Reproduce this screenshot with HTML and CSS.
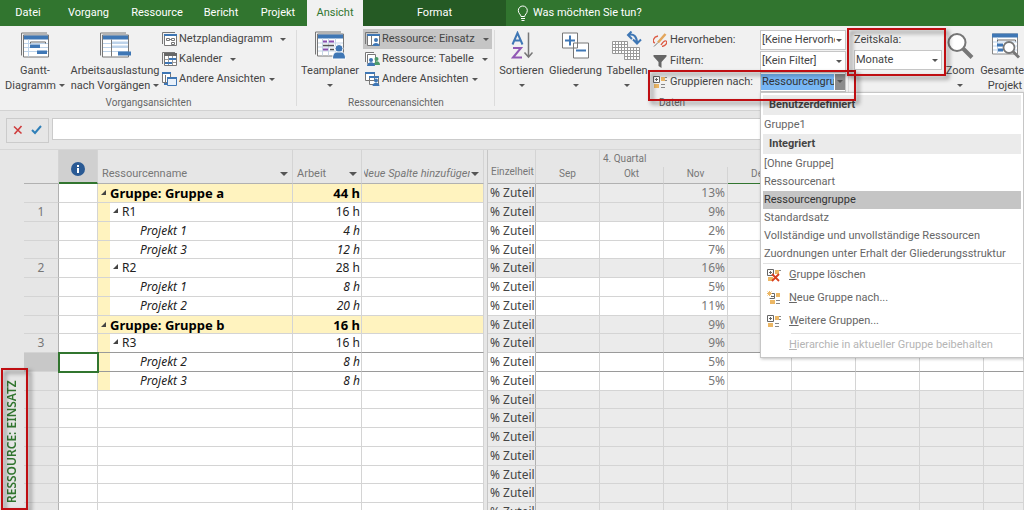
FILE: index.html
```html
<!DOCTYPE html>
<html lang="de">
<head>
    <meta charset="UTF-8">
    <meta name="viewport" content="width=device-width, initial-scale=1.0">
    <title>Ressource: Einsatz</title>
    <link rel="stylesheet" href="styles.css">
</head>
<body>
    <nav class="tabs">
        <a href="#" class="tab tab-file">Datei</a>
        <a href="#" class="tab tab-task">Vorgang</a>
        <a href="#" class="tab tab-resource">Ressource</a>
        <a href="#" class="tab tab-report">Bericht</a>
        <a href="#" class="tab tab-project">Projekt</a>
        <a href="#" class="tab tab-view active">Ansicht</a>
        <a href="#" class="tab tab-format">Format</a>
        <a href="#" class="tell-me">
            <svg width="12" height="17" viewBox="0 0 12 17" fill="none" stroke="#fff"><path d="M4 11.5c0-2-2.7-3-2.7-6a4.5 4.5 0 0 1 9 0c0 3-2.6 4-2.6 6zM4 13.5h4M4.500 15.500h3"/></svg>
            Was möchten Sie tun?
        </a>
    </nav>

    <div class="ribbon">
        <!-- Vorgangsansichten -->
        <section class="group group-tasks">
            <div class="group-body">
                <button class="big big-gantt">
                    <svg width="29" height="26" viewBox="0 0 29 26"><path d="M.5 23V.5H26" fill="none" stroke="#777"/><path d="M2.500 2.500h25v22h-25z" fill="#fff" stroke="#777"/><path d="M3 3h24v4H3z" fill="#3f77b5"/><path d="M3 11h24M3 15h24M3 19h24M7.500 7v17" stroke="#bdd3ea"/><path d="M9.500 11V9.500h15V11" fill="none" stroke="#666"/><path d="M9 12h10v3.500H9zM16 18h10v3.500H16z" fill="#3f77b5"/></svg>
                    <span>Gantt-</span>
                    <span class="arrow-line">Diagramm<i class="arrow"></i></span>
                </button>
                <button class="big big-usage">
                    <svg width="31" height="26" viewBox="0 0 31 26"><path d="M.5 23V.5H26" fill="none" stroke="#777"/><path d="M2.500 2.500h26v22h-26z" fill="#fff" stroke="#777"/><path d="M3 3h25v4H3z" fill="#3f77b5"/><path d="M3 11h25M3 15h25M3 19h25" stroke="#bdd3ea"/><path d="M12 9h16v2H12zM12 13h16v2H12z" fill="#bdd3ea"/><path d="M11.500 7v17" stroke="#777"/><path d="M18 19h13v4H18z" fill="#3f77b5"/></svg>
                    <span>Arbeitsauslastung</span>
                    <span class="arrow-line">nach Vorgängen<i class="arrow"></i></span>
                </button>
                <div class="stack">
                    <button class="small">
                        <svg width="15" height="14" viewBox="0 0 15 14"><path d="M.5 12V.5H13" fill="none" stroke="#777"/><path d="M2.500 2.500h12v11h-12z" fill="#fff" stroke="#777"/><path d="M2 2h13v2H2z" fill="#3f77b5"/><path d="M4.500 6.500h3v2h-3zM9.500 6.500h3v2h-3zM9.500 10.500h3v2h-3zM7.500 7.500h2" fill="none" stroke="#777"/></svg>
                        <span>Netzplandiagramm</span><i class="arrow wide"></i>
                    </button>
                    <button class="small">
                        <svg width="15" height="14" viewBox="0 0 15 14"><path d="M.5 12V.5H13" fill="none" stroke="#777"/><path d="M2.500 2.500h12v11h-12z" fill="#fff" stroke="#777"/><path d="M2 1h13v3H2z" fill="#666"/><path d="M6.500 4v9M10.500 4v9M3 7.500h11M3 10.500h11" stroke="#999"/><path d="M7 6h7v2H7zM3 10h7v2H3z" fill="#3f77b5"/></svg>
                        <span>Kalender</span><i class="arrow wide"></i>
                    </button>
                    <button class="small">
                        <svg width="15" height="14" viewBox="0 0 15 14"><path d="M.5 .5h8v10h-8zM3.500 3v7" fill="#fff" stroke="#777"/><path d="M0 0h9v2H0z" fill="#3f77b5"/><path d="M5.500 5.500h9v8h-9z" fill="#e9f1fa" stroke="#3f77b5"/><path d="M5 5h10v2H5zM2 11h3v2H2z" fill="#3f77b5"/></svg>
                        <span>Andere Ansichten</span><i class="arrow"></i>
                    </button>
                </div>
            </div>
            <div class="group-title">Vorgangsansichten</div>
        </section>

        <!-- Ressourcenansichten -->
        <section class="group group-resources">
            <div class="group-body">
                <button class="big big-team">
                    <svg width="31" height="28" viewBox="0 0 31 28"><path d="M.5 23V.5H26" fill="none" stroke="#777"/><path d="M2.500 2.500h26v22h-26z" fill="#fff" stroke="#777"/><path d="M3 3h25v4H3z" fill="#3f77b5"/><path d="M7.500 7v17M3 11.500h25M3 15.500h25M3 19.500h25M13.500 7v17M20.500 7v17" stroke="#c5d5e6"/><path d="M8 10h4M14 10h5M8 18h5" stroke="#8a4fb0" stroke-width="2"/><path d="M8 14h11M15 18h4" stroke="#555" stroke-width="1.500"/><circle cx="24" cy="17" r="4" fill="#3f77b5" stroke="#fff"/><path d="M17.500 27.500c0-7 3-7 6.500-7s6.500 0 6.500 7z" fill="#3f77b5" stroke="#fff"/></svg>
                    <span>Teamplaner</span>
                    <i class="arrow"></i>
                </button>
                <div class="stack">
                    <button class="small pressed">
                        <svg width="15" height="14" viewBox="0 0 15 14"><path d="M.5 12V.5H13" fill="none" stroke="#777"/><path d="M2.500 2.500h12v11h-12zM6.500 3v10" fill="#fff" stroke="#777"/><path d="M2 2h13v2H2z" fill="#3f77b5"/><circle cx="11" cy="8" r="2" fill="#3f77b5"/><path d="M7.500 14c0-4 7-4 7 0z" fill="#3f77b5"/></svg>
                        <span>Ressource: Einsatz</span><i class="arrow wide"></i>
                    </button>
                    <button class="small">
                        <svg width="15" height="14" viewBox="0 0 15 14"><path d="M.5 10V.5H9M2.500 2.500h8v9h-8z" fill="#fff" stroke="#777"/><circle cx="11.500" cy="7" r="2" fill="#4c9b6a"/><path d="M9 13c0-5 6-5 6 0z" fill="#4c9b6a"/><circle cx="6" cy="8" r="2" fill="#3f77b5"/><path d="M2 14c0-5 8-5 8 0z" fill="#3f77b5"/></svg>
                        <span>Ressource: Tabelle</span><i class="arrow wide"></i>
                    </button>
                    <button class="small">
                        <svg width="15" height="14" viewBox="0 0 15 14"><path d="M.5 .5h9v8h-9zM4.500 4.500h9v8h-9z" fill="#fff" stroke="#777"/><path d="M0 0h10v2H0zM4 4h10v2H4z" fill="#3f77b5"/><circle cx="11" cy="8.500" r="2" fill="#3f77b5"/><path d="M7.500 14c0-4.500 7-4.500 7 0z" fill="#3f77b5"/></svg>
                        <span>Andere Ansichten</span><i class="arrow"></i>
                    </button>
                </div>
            </div>
            <div class="group-title">Ressourcenansichten</div>
        </section>

        <!-- Daten -->
        <section class="group group-data">
            <div class="group-body">
                <button class="big big-sort">
                    <svg width="22" height="28" viewBox="0 0 22 28" fill="none" stroke-width="2"><path d="M1.500 13 6.500 1.500 11.500 13M3.200 9h6.600" stroke="#3f77b5"/><path d="M2 16.500h8L2 26h9" stroke="#9159b5"/><path d="M17.500 1v24M13.500 21l4 4.500 4-4.500" stroke="#777" stroke-width="1.500"/></svg>
                    <span>Sortieren</span>
                    <i class="arrow"></i>
                </button>
                <button class="big big-outline">
                    <svg width="27" height="28" viewBox="0 0 27 28"><path d="M.5 1.500h15v15H.5zM11.500 11.500h15v15h-15z" fill="#fff" stroke="#777"/><path d="M3 9h10M8 4v10M14 19h10" stroke="#3f77b5" stroke-width="2"/></svg>
                    <span>Gliederung</span>
                    <i class="arrow"></i>
                </button>
                <button class="big big-tables">
                    <svg width="30" height="29" viewBox="0 0 30 29"><path d="M.5 10.500h15v12H.5zM.5 13.500h15M.5 16.500h15M.5 19.500h15M3.500 10v12M6.500 10v12M9.500 10v12M12.500 10v12" fill="#fff" stroke="#999"/><path d="M12.500 16.500h15v12h-15zM12.500 19.500h15M12.500 22.500h15M12.500 25.500h15M15.500 16v12M18.500 16v12M21.500 16v12M24.500 16v12" fill="#fff" stroke="#999"/><path d="M16 4c6-2 9 2 9 8M19.500 .5L16 4l4 4M21 8.500l4 4 4-4" fill="none" stroke="#3f77b5" stroke-width="2"/></svg>
                    <span>Tabellen</span>
                    <i class="arrow"></i>
                </button>
                <div class="filters">
                    <div class="filter-row">
                        <svg width="14" height="14" viewBox="0 0 14 14" fill="none"><path d="M5 9.500 12.500 1" stroke="#e3a65c" stroke-width="2.500"/><path d="M5 3C0 4-1 9 2 10M8 12c2-3 3-5 5-4s0 5-4 5.500" stroke="#dd5a43" stroke-width="1.300"/><path d="M1 13.500l4-4" stroke="#777"/></svg>
                        <label for="highlight">Hervorheben:</label>
                        <div class="field"><select id="highlight"><option>[Keine Hervorhebung]</option></select></div>
                    </div>
                    <div class="filter-row">
                        <svg width="14" height="14" viewBox="0 0 14 14"><path d="M.5 1h13v1.500L8.500 8v6l-3-2V8L.5 2.500z" fill="#666"/></svg>
                        <label for="filter">Filtern:</label>
                        <div class="field"><select id="filter"><option>[Kein Filter]</option></select></div>
                    </div>
                    <div class="filter-row marked">
                        <svg width="14" height="14" viewBox="0 0 14 14"><path d="M.5 1.500h6v6h-6zM2 4.500h3M3.500 3v3" fill="#fff" stroke="#666"/><path d="M8 2h4v4H8zM1 9h5v4H1z" fill="#ecb765"/><path d="M12 2.500h2M12 5.500h2M8 9.500h4M8 12.500h4" stroke="#888"/></svg>
                        <label for="group-by">Gruppieren nach:</label>
                        <div class="field combo">
                            <input id="group-by" type="text" value="Ressourcengruppe">
                            <button class="combo-button" aria-label="Öffnen"><i class="arrow"></i></button>
                            <div class="menu">
                                <div class="menu-title">Benutzerdefiniert</div>
                                <button class="menu-item">Gruppe1</button>
                                <div class="menu-title">Integriert</div>
                                <button class="menu-item">[Ohne Gruppe]</button>
                                <button class="menu-item">Ressourcenart</button>
                                <button class="menu-item selected">Ressourcengruppe</button>
                                <button class="menu-item">Standardsatz</button>
                                <button class="menu-item">Vollständige und unvollständige Ressourcen</button>
                                <button class="menu-item">Zuordnungen unter Erhalt der Gliederungsstruktur</button>
                                <hr>
                                <button class="menu-command">
                                    <svg width="14" height="14" viewBox="0 0 14 14"><path d="M.5 1.500h6v6h-6zM2 4.500h3M3.500 3v3" fill="#fff" stroke="#666"/><path d="M8 2h4v4H8zM1 9h5v4H1z" fill="#ecb765"/><path d="M12 2.500h2" stroke="#888"/><path d="M5 6l7 7M12 6l-7 7" stroke="#d8401f" stroke-width="1.800"/></svg>
                                    <span><u>G</u>ruppe löschen</span>
                                </button>
                                <button class="menu-command">
                                    <svg width="14" height="14" viewBox="0 0 14 14"><path d="M3.500 2.500h4v5h-5M4 5.500h3" fill="#fff" stroke="#666"/><path d="M9 2h4v4H9zM3 9h5v4H3z" fill="#ecb765"/><path d="M9 9.500h4M9 12.500h4" stroke="#888"/><path d="M0 2.500h5M2.500 0v5M.5 .5l4 4M4.500 .5l-4 4" stroke="#ecb765"/></svg>
                                    <span><u>N</u>eue Gruppe nach...</span>
                                </button>
                                <button class="menu-command">
                                    <svg width="14" height="14" viewBox="0 0 14 14"><path d="M.5 1.500h6v6h-6zM2 4.500h3M3.500 3v3" fill="#fff" stroke="#666"/><path d="M8 2h4v4H8zM1 9h5v4H1z" fill="#ecb765"/><path d="M12 2.500h2M12 5.500h2M8 9.500h4M8 12.500h4" stroke="#888"/></svg>
                                    <span><u>W</u>eitere Gruppen...</span>
                                </button>
                                <hr class="short">
                                <button class="menu-command" disabled><span><u>H</u>ierarchie in aktueller Gruppe beibehalten</span></button>
                            </div>
                        </div>
                    </div>
                </div>
            </div>
            <div class="group-title">Daten</div>
        </section>

        <!-- Zoom -->
        <section class="group group-zoom">
            <div class="group-body">
                <div class="timescale marked">
                    <label for="timescale">Zeitskala:</label>
                    <div class="field"><select id="timescale"><option>Monate</option></select></div>
                </div>
                <button class="big big-zoom">
                    <svg width="28" height="28" viewBox="0 0 28 28"><circle cx="11" cy="11" r="8.500" fill="#fff" stroke="#777" stroke-width="2"/><path d="M17 17l9 9" stroke="#777" stroke-width="4"/></svg>
                    <span>Zoom</span>
                    <i class="arrow"></i>
                </button>
                <button class="big big-project">
                    <svg width="29" height="28" viewBox="0 0 29 28"><path d="M1.500 2.500h25v20h-25z" fill="#fff" stroke="#888"/><path d="M1 2h26v4H1z" fill="#3f77b5"/><path d="M2 10.500h24M2 14.500h24M2 18.500h24M6.500 6v16" stroke="#bdd3ea"/><path d="M6.500 10V8.500h18V10" fill="none" stroke="#666"/><path d="M6 12h6v3H6zM7 17h5v3H7z" fill="#3f77b5"/><circle cx="18" cy="16" r="5.500" fill="#fff" stroke="#777" stroke-width="1.800"/><path d="M22 20l6 6" stroke="#777" stroke-width="3"/></svg>
                    <span>Gesamtes</span>
                    <span>Projekt</span>
                </button>
            </div>
        </section>
    </div>

    <div class="entry-bar">
        <div class="entry-buttons">
            <button aria-label="Abbrechen"><svg width="10" height="10" viewBox="0 0 10 10"><path d="M1 1.500l7.500 7M8.500 1l-7 8" stroke="#cf3c3c" stroke-width="1.600"/></svg></button>
            <button aria-label="Eingeben"><svg width="11" height="10" viewBox="0 0 11 10"><path d="M1 5l3 3 6-7" fill="none" stroke="#2f7fb8" stroke-width="2"/></svg></button>
        </div>
        <input type="text" class="entry-input" aria-label="Eingabe">
    </div>

    <main class="sheet">
        <div class="view-bar">
            <div class="view-label marked">
                <div class="view-name">RESSOURCE: EINSATZ</div>
            </div>
        </div>

        <table class="grid resource-grid">
            <colgroup><col class="c-number"><col class="c-info"><col class="c-name"><col class="c-work"><col class="c-new"></colgroup>
            <thead>
                <tr>
                    <th></th>
                    <th class="info"><svg width="14" height="14" viewBox="0 0 14 14"><circle cx="7" cy="7" r="7" fill="#2a5a94"/><path d="M7 3v2M7 6v5" stroke="#fff" stroke-width="2"/></svg></th>
                    <th><div class="head">Ressourcenname<i class="arrow dark"></i></div></th>
                    <th><div class="head">Arbeit<i class="arrow dark"></i></div></th>
                    <th class="new"><div class="head"><span>Neue Spalte hinzufügen</span><i class="arrow dark"></i></div></th>
                </tr>
            </thead>
            <tbody>
                <tr class="total"><th></th><td></td><td><i class="fold"></i>Gruppe: Gruppe a</td><td>44 h</td><td></td></tr>
                <tr class="resource"><th>1</th><td></td><td><i class="fold"></i>R1</td><td>16 h</td><td></td></tr>
                <tr class="task"><th></th><td></td><td>Projekt 1</td><td>4 h</td><td></td></tr>
                <tr class="task"><th></th><td></td><td>Projekt 3</td><td>12 h</td><td></td></tr>
                <tr class="resource"><th>2</th><td></td><td><i class="fold"></i>R2</td><td>28 h</td><td></td></tr>
                <tr class="task"><th></th><td></td><td>Projekt 1</td><td>8 h</td><td></td></tr>
                <tr class="task"><th></th><td></td><td>Projekt 2</td><td>20 h</td><td></td></tr>
                <tr class="total"><th></th><td></td><td><i class="fold"></i>Gruppe: Gruppe b</td><td>16 h</td><td></td></tr>
                <tr class="resource before-current"><th>3</th><td></td><td><i class="fold"></i>R3</td><td>16 h</td><td></td></tr>
                <tr class="task current"><th></th><td></td><td>Projekt 2</td><td>8 h</td><td></td></tr>
                <tr class="task"><th></th><td></td><td>Projekt 3</td><td>8 h</td><td></td></tr>
                <tr><th></th><td></td><td></td><td></td><td></td></tr>
                <tr><th></th><td></td><td></td><td></td><td></td></tr>
                <tr><th></th><td></td><td></td><td></td><td></td></tr>
                <tr><th></th><td></td><td></td><td></td><td></td></tr>
                <tr><th></th><td></td><td></td><td></td><td></td></tr>
                <tr><th></th><td></td><td></td><td></td><td></td></tr>
                <tr><th></th><td></td><td></td><td></td><td></td></tr>
            </tbody>
        </table>

        <div class="splitter"></div>

        <div class="time-pane">
            <table class="grid time-grid">
                <colgroup><col class="c-detail"><col class="c-month"><col class="c-month"><col class="c-month"><col class="c-month"><col class="c-month"><col class="c-month"><col class="c-month"><col></colgroup>
                <thead>
                    <tr>
                        <th rowspan="2" class="detail-head"><div>Einzelheiten</div></th>
                        <th></th>
                        <th colspan="3" class="quarter">4. Quartal</th>
                        <th colspan="3"></th>
                        <th></th>
                    </tr>
                    <tr class="months"><th>Sep</th><th>Okt</th><th>Nov</th><th class="marked-month">Dez</th><th></th><th></th><th></th><th></th></tr>
                </thead>
                <tbody>
                    <tr class="sum"><th>% Zuteil</th><td></td><td></td><td>13%</td><td></td><td></td><td></td><td></td><td></td></tr>
                    <tr class="sum"><th>% Zuteil</th><td></td><td></td><td>9%</td><td></td><td></td><td></td><td></td><td></td></tr>
                    <tr><th>% Zuteil</th><td></td><td></td><td>2%</td><td></td><td></td><td></td><td></td><td></td></tr>
                    <tr><th>% Zuteil</th><td></td><td></td><td>7%</td><td></td><td></td><td></td><td></td><td></td></tr>
                    <tr class="sum"><th>% Zuteil</th><td></td><td></td><td>16%</td><td></td><td></td><td></td><td></td><td></td></tr>
                    <tr><th>% Zuteil</th><td></td><td></td><td>5%</td><td></td><td></td><td></td><td></td><td></td></tr>
                    <tr><th>% Zuteil</th><td></td><td></td><td>11%</td><td></td><td></td><td></td><td></td><td></td></tr>
                    <tr class="sum"><th>% Zuteil</th><td></td><td></td><td>9%</td><td></td><td></td><td></td><td></td><td></td></tr>
                    <tr class="sum before-current"><th>% Zuteil</th><td></td><td></td><td>9%</td><td></td><td></td><td></td><td></td><td></td></tr>
                    <tr class="current"><th>% Zuteil</th><td></td><td></td><td>5%</td><td></td><td></td><td></td><td></td><td></td></tr>
                    <tr><th>% Zuteil</th><td></td><td></td><td>5%</td><td></td><td></td><td></td><td></td><td></td></tr>
                    <tr class="sum"><th>% Zuteil</th><td></td><td></td><td></td><td></td><td></td><td></td><td></td><td></td></tr>
                    <tr class="sum"><th>% Zuteil</th><td></td><td></td><td></td><td></td><td></td><td></td><td></td><td></td></tr>
                    <tr class="sum"><th>% Zuteil</th><td></td><td></td><td></td><td></td><td></td><td></td><td></td><td></td></tr>
                    <tr class="sum"><th>% Zuteil</th><td></td><td></td><td></td><td></td><td></td><td></td><td></td><td></td></tr>
                    <tr class="sum"><th>% Zuteil</th><td></td><td></td><td></td><td></td><td></td><td></td><td></td><td></td></tr>
                    <tr class="sum"><th>% Zuteil</th><td></td><td></td><td></td><td></td><td></td><td></td><td></td><td></td></tr>
                    <tr class="sum"><th>% Zuteil</th><td></td><td></td><td></td><td></td><td></td><td></td><td></td><td></td></tr>
                </tbody>
            </table>
        </div>
    </main>
</body>
</html>
```

FILE: styles.css
```css
* {
    margin: 0;
    padding: 0;
    box-sizing: border-box;
}

body {
    font-family: Roboto, 'Noto Sans', sans-serif;
    font-size: 11px;
    line-height: 16px;
    color: #444;
    background-color: #e6e6e6;
    height: 100vh;
    overflow: hidden;
    display: flex;
    flex-direction: column;
}

button,
input,
select {
    font: inherit;
    color: inherit;
    border: none;
    background: none;
    white-space: nowrap;
}

button {
    cursor: pointer;
}

svg {
    display: block;
    flex: none;
}

/* Register */
.tabs {
    display: flex;
    flex: none;
    height: 26px;
    background-color: #31752f;
}

.tab,
.tell-me {
    display: flex;
    align-items: center;
    justify-content: center;
    color: #fff;
    text-decoration: none;
}

.tab-file {
    width: 56px;
}

.tab-task {
    width: 65px;
}

.tab-resource {
    width: 72px;
}

.tab-report {
    width: 56px;
}

.tab-project {
    width: 58px;
}

.tab-view {
    width: 56px;
}

.tab-format {
    width: 143px;
    background-color: #255a24;
}

.tab.active {
    background-color: #f1f1f1;
    color: #31752f;
}

.tell-me {
    padding-left: 11px;
    gap: 4px;
}

/* Menueband */
.ribbon {
    display: flex;
    flex: none;
    height: 85px;
    background-color: #f1f1f1;
    border-bottom: 1px solid #d2d2d2;
}

.group {
    position: relative;
    display: flex;
    flex-direction: column;
    flex: none;
    padding-top: 3px;
}

.group::after {
    content: "";
    position: absolute;
    top: 4px;
    bottom: 4px;
    right: 0;
    width: 1px;
    background-color: #dcdcdc;
}

.group-tasks {
    width: 297px;
}

.group-resources {
    width: 198px;
}

.group-data {
    width: 354px;
}

.group-body {
    display: flex;
    height: 67px;
}

.group-title {
    text-align: center;
    font-size: 10px;
    line-height: 14px;
    color: #666;
}

.big {
    display: flex;
    flex-direction: column;
    align-items: center;
    flex: none;
    line-height: 15px;
}

.big svg {
    height: 34px;
    padding: 2px 0 3px;
}

.big > .arrow {
    margin-top: 6px;
}

.big-gantt {
    width: 70px;
}

.big-usage {
    width: 90px;
}

.big-team {
    width: 66px;
}

.big-sort {
    width: 53px;
}

.big-outline {
    width: 55px;
}

.big-tables {
    width: 48px;
}

.big-zoom {
    width: 36px;
}

.big-project {
    width: 54px;
}

.arrow {
    flex: none;
    width: 0;
    height: 0;
    border: 3px solid transparent;
    border-top-color: #555;
    border-bottom: none;
}

.arrow-line {
    display: flex;
    align-items: center;
    gap: 3px;
}

.stack {
    display: flex;
    flex-direction: column;
    align-items: flex-start;
}

.small {
    display: flex;
    align-items: center;
    height: 20px;
    padding: 0 3px 0 2px;
    gap: 2px;
}

.small .arrow {
    margin-left: 2px;
}

.small .arrow.wide {
    margin-left: 6px;
}

.pressed {
    background-color: #c5c5c5;
}

.filters {
    flex: 1;
    padding-left: 2px;
}

.filter-row {
    position: relative;
    display: flex;
    align-items: center;
    height: 21px;
    gap: 3px;
}

.filter-row label {
    width: 87px;
    white-space: nowrap;
}

.field {
    position: relative;
    width: 86px;
    height: 20px;
    background-color: #fff;
    border: 1px solid #c6c6c6;
}

.field select {
    appearance: none;
    width: 100%;
    height: 18px;
    padding: 0 10px 0 1px;
}

.field:not(.combo)::after {
    content: "";
    position: absolute;
    right: 3px;
    top: 8px;
    border: 3px solid transparent;
    border-top-color: #555;
    border-bottom: none;
}

.combo {
    display: flex;
    padding: 1px 0;
}

.combo input {
    width: 73px;
    margin-right: 1px;
    padding-left: 1px;
    background-color: #77b6f4;
    color: #333;
}

.combo-button {
    flex: 1;
    display: flex;
    align-items: center;
    justify-content: center;
    background-color: #8c8c8c;
}

/* rote Markierungen */
.marked::before {
    content: "";
    position: absolute;
    z-index: 20;
    border: 2px solid #bf0e12;
    filter: drop-shadow(3px 3px 2px rgba(0, 0, 0, 0.5));
    pointer-events: none;
}

.filter-row.marked::before {
    inset: -1px -7px -9px -5px;
}

.timescale {
    position: relative;
    display: flex;
    flex-direction: column;
    width: 93px;
    padding: 3px 0 0 5px;
}

.timescale label {
    height: 18px;
}

.timescale .field {
    width: 88px;
}

.timescale.marked::before {
    inset: -1px -4px 20px -2px;
}

/* Gruppierungsmenue */
.menu {
    position: absolute;
    z-index: 10;
    top: 19px;
    left: -1px;
    width: 264px;
    padding: 2px 2px 0;
    background-color: #fff;
    border: 1px solid #c6c6c6;
    box-shadow: 1px 1px 3px rgba(0, 0, 0, 0.25);
}

.menu-title {
    height: 20px;
    line-height: 20px;
    margin-bottom: 1px;
    padding-left: 6px;
    background-color: #ebebeb;
    font-weight: bold;
}

.menu-item {
    display: block;
    width: 100%;
    height: 18px;
    padding-left: 1px;
    line-height: 18px;
    text-align: left;
    color: #666;
}

.menu-item.selected {
    background-color: #c5c5c5;
    color: #333;
}

.menu hr {
    border: none;
    border-top: 1px solid #e1e1e1;
}

.menu hr.short {
    margin-left: 28px;
}

.menu-command {
    display: flex;
    align-items: center;
    height: 23px;
    width: 100%;
    padding-left: 4px;
    gap: 8px;
    color: #666;
}

.menu-command:disabled {
    padding-left: 26px;
    color: #b5b5b5;
}

/* Eingabezeile */
.entry-bar {
    display: flex;
    flex: none;
    height: 38px;
    padding: 7px 0 6px 6px;
    gap: 3px;
}

.entry-buttons {
    display: flex;
    align-items: center;
    width: 43px;
    padding: 0 6px;
    gap: 8px;
    border: 1px solid #cbcbcb;
}

.entry-buttons svg {
    margin-top: -2px;
}

.entry-input {
    flex: 1;
    height: 22px;
    background-color: #fff;
    border: 1px solid #cbcbcb;
}

/* Tabelle */
.sheet {
    display: flex;
    flex: 1;
    min-height: 0;
    border-top: 1px solid #d6d6d6;
}

.view-bar {
    flex: none;
    display: flex;
    flex-direction: column;
    justify-content: flex-end;
    width: 24px;
}

.view-label {
    position: relative;
}

.view-name {
    writing-mode: vertical-rl;
    transform: rotate(180deg);
    width: 24px;
    height: 142px;
    padding-top: 7px;
    line-height: 24px;
    font-family: 'Noto Sans', sans-serif;
    font-size: 12px;
    color: #31752f;
    font-weight: 600;
    white-space: nowrap;
}

.view-label.marked::before {
    inset: 0 -4px 0 1px;
}

.grid {
    table-layout: fixed;
    border-collapse: separate;
    border-spacing: 0;
    line-height: 16px;
    align-self: flex-start;
}

.grid tbody {
    font-family: 'Noto Sans', sans-serif;
    font-size: 12px;
}

.resource-grid {
    width: 460px;
    flex: none;
}

.c-number {
    width: 35px;
}

.c-info {
    width: 39px;
}

.c-name {
    width: 195px;
}

.c-work {
    width: 69px;
}

.c-detail {
    width: 48px;
}

.c-month {
    width: 64px;
}

.grid th {
    font-weight: normal;
    color: #777;
}

.grid th,
.grid td {
    border-right: 1px solid #d4d4d4;
    border-bottom: 1px solid #d4d4d4;
    overflow: hidden;
    white-space: nowrap;
}

.grid tbody tr {
    height: 19px;
}

.grid tbody tr:nth-child(4n) {
    height: 18px;
}

.grid tbody td {
    background-color: #fff;
}

.resource-grid thead tr {
    height: 34px;
}

.grid thead th {
    border-bottom-color: #b1b1b1;
}

.resource-grid thead th {
    vertical-align: bottom;
}

.grid thead th.info {
    background-color: #d0d0d0;
    border-bottom: 2px solid #31752f;
    vertical-align: middle;
}

.info svg {
    margin: 6px auto 0;
}

.head {
    display: flex;
    align-items: center;
    justify-content: space-between;
    height: 18px;
    padding: 0 4px;
}

.new .head {
    justify-content: center;
    gap: 1px;
    padding: 0 4px 0 2px;
    font-style: italic;
}

.new span {
    display: flex;
    justify-content: center;
    width: 106px;
    overflow: hidden;
}

.arrow.dark {
    border-width: 4px;
    border-bottom: none;
}

.resource-grid tbody th {
    border-right-color: #b1b1b1;
}

.resource-grid td:nth-child(3) {
    padding-left: 15px;
    color: #222;
}

.resource-grid td:nth-child(4) {
    padding-right: 1px;
    text-align: right;
    color: #222;
}

.fold {
    display: inline-block;
    width: 0;
    height: 0;
    margin-right: 4px;
    vertical-align: 3px;
    border-left: 5px solid transparent;
    border-bottom: 5px solid #444;
}

.resource-grid .total td:nth-child(n+3) {
    background-color: #fff3bf;
    color: #000;
    font-size: 13px;
    font-weight: bold;
}

.resource-grid .total td:nth-child(3) {
    padding-left: 3px;
}

.resource td:nth-child(3),
.task td:nth-child(3) {
    background: linear-gradient(to right, #fff3bf 12px, #fff 12px);
}

.task td {
    font-style: italic;
}

.resource-grid .task td:nth-child(3) {
    padding-left: 42px;
}

.before-current td,
.current td {
    border-bottom-color: #9a9a9a;
}

.resource-grid .current th {
    background-color: #c8c8c8;
}

.current td:nth-child(2) {
    outline: 2px solid #31752f;
    outline-offset: -1px;
}

.time-grid .current td:nth-child(2) {
    outline: none;
}

.splitter {
    flex: none;
    width: 4px;
    background-color: #e6e6e6;
    border-right: 1px solid #c6c6c6;
}

.time-pane {
    flex: 1;
    min-width: 0;
    overflow: hidden;
}

.time-grid {
    width: 100%;
}

.time-grid thead {
    font-size: 10px;
}

.time-grid thead tr {
    height: 17px;
}

.time-grid thead tr:first-child th:not(.detail-head) {
    border-bottom: none;
}

.grid .quarter {
    padding-left: 3px;
    text-align: left;
}

.time-grid thead .months th {
    line-height: 14px;
    vertical-align: top;
}

.detail-head div {
    width: 43px;
    margin-left: 3px;
    padding-top: 10px;
    text-align: left;
    overflow: hidden;
}

.grid thead .marked-month {
    border-bottom-color: #31752f;
}

.time-grid tbody th {
    padding-left: 2px;
    text-align: left;
    color: #444;
    background-color: #fff;
    border-right-color: #b1b1b1;
}

.time-grid tbody td {
    padding-right: 2px;
    text-align: right;
    color: #777;
}

.time-grid .sum th,
.time-grid .sum td {
    background-color: #ebebeb;
}
```
